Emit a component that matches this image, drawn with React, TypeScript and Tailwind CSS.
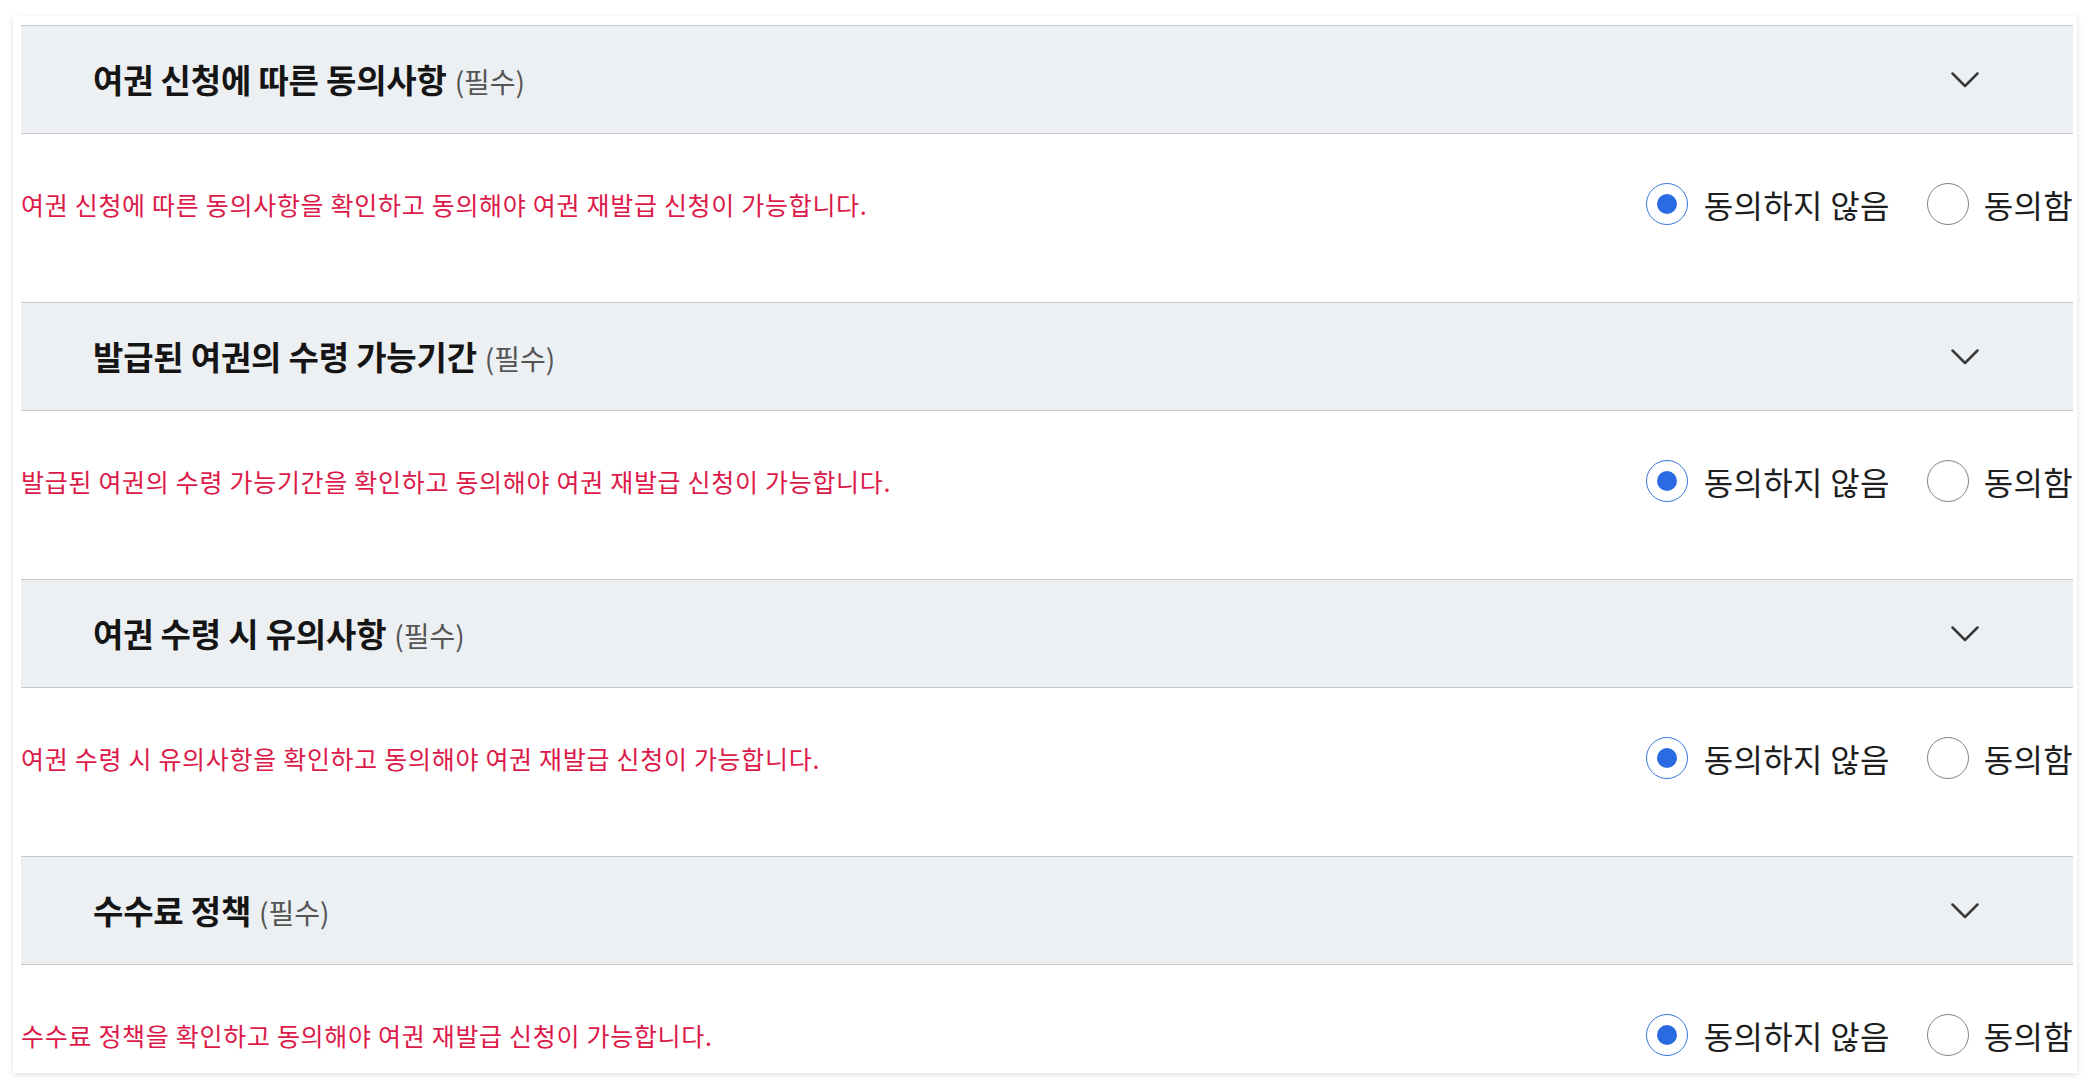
import { useState } from "react";

interface Section {
  title: string;
  notice: string;
}

const SECTIONS: Section[] = [
  {
    title: "여권 신청에 따른 동의사항",
    notice: "여권 신청에 따른 동의사항을 확인하고 동의해야 여권 재발급 신청이 가능합니다.",
  },
  {
    title: "발급된 여권의 수령 가능기간",
    notice: "발급된 여권의 수령 가능기간을 확인하고 동의해야 여권 재발급 신청이 가능합니다.",
  },
  {
    title: "여권 수령 시 유의사항",
    notice: "여권 수령 시 유의사항을 확인하고 동의해야 여권 재발급 신청이 가능합니다.",
  },
  {
    title: "수수료 정책",
    notice: "수수료 정책을 확인하고 동의해야 여권 재발급 신청이 가능합니다.",
  },
];

function Chevron() {
  return (
    <svg width="28" height="16" viewBox="0 0 28 16" fill="none">
      <polyline
        points="1.5,1.5 14,14 26.5,1.5"
        stroke="#3a3a3a"
        strokeWidth="2.5"
        strokeLinecap="round"
        strokeLinejoin="round"
      />
    </svg>
  );
}

function Radio({ checked }: { checked: boolean }) {
  return checked ? (
    <span className="flex h-[42px] w-[42px] shrink-0 items-center justify-center rounded-full border-[1.5px] border-[#3b78dc] bg-white">
      <span className="h-[20px] w-[20px] rounded-full bg-[#2a6be3]" />
    </span>
  ) : (
    <span className="h-[42px] w-[42px] shrink-0 rounded-full border border-[#858585] bg-white" />
  );
}

export default function App() {
  const [answers, setAnswers] = useState<boolean[]>(SECTIONS.map(() => false));

  const choose = (i: number, agree: boolean) =>
    setAnswers((prev) => prev.map((v, j) => (j === i ? agree : v)));

  return (
    <div className="min-h-screen bg-white pt-[16px] font-['Noto_Sans_CJK_KR','Noto_Sans',sans-serif]">
      <div className="ml-[13px] w-[2064px] bg-white pb-[17px] pl-[8px] pr-[4px] pt-[9px] shadow-[0_2px_6px_rgba(0,0,0,0.13)]">
        {SECTIONS.map((s, i) => (
          <div key={i}>
            {/* Header */}
            <div className="flex h-[109px] items-center justify-between border-y border-[#c9c9cc] bg-[#edf0f3] pl-[72px] pr-[94px]">
              <div className="flex items-baseline gap-[8px]">
                <span className="text-[33px] font-bold tracking-[-0.2px] text-[#151515]">
                  {s.title}
                </span>
                <span className="text-[28px] text-[#555]">(필수)</span>
              </div>
              <Chevron />
            </div>

            {/* Body */}
            <div
              className={
                i === SECTIONS.length - 1
                  ? "flex h-[91px] items-end justify-between"
                  : "flex h-[168px] items-start justify-between pt-[49px]"
              }
            >
              <div className="flex h-[42px] items-center">
                <p className="text-[25px] leading-[42px] tracking-[0.7px] text-[#dc1a4a]">
                  {s.notice}
                </p>
              </div>
              <div className="flex items-center gap-[37px]">
                <button
                  className="flex items-center gap-[16px]"
                  onClick={() => choose(i, false)}
                >
                  <Radio checked={!answers[i]} />
                  <span className="text-[32px] leading-[42px] tracking-[0.3px] text-[#1e1e1e]">
                    동의하지 않음
                  </span>
                </button>
                <button
                  className="flex items-center gap-[15px]"
                  onClick={() => choose(i, true)}
                >
                  <Radio checked={answers[i]} />
                  <span className="text-[32px] leading-[42px] tracking-[0.3px] text-[#1e1e1e]">
                    동의함
                  </span>
                </button>
              </div>
            </div>
          </div>
        ))}
      </div>
    </div>
  );
}
